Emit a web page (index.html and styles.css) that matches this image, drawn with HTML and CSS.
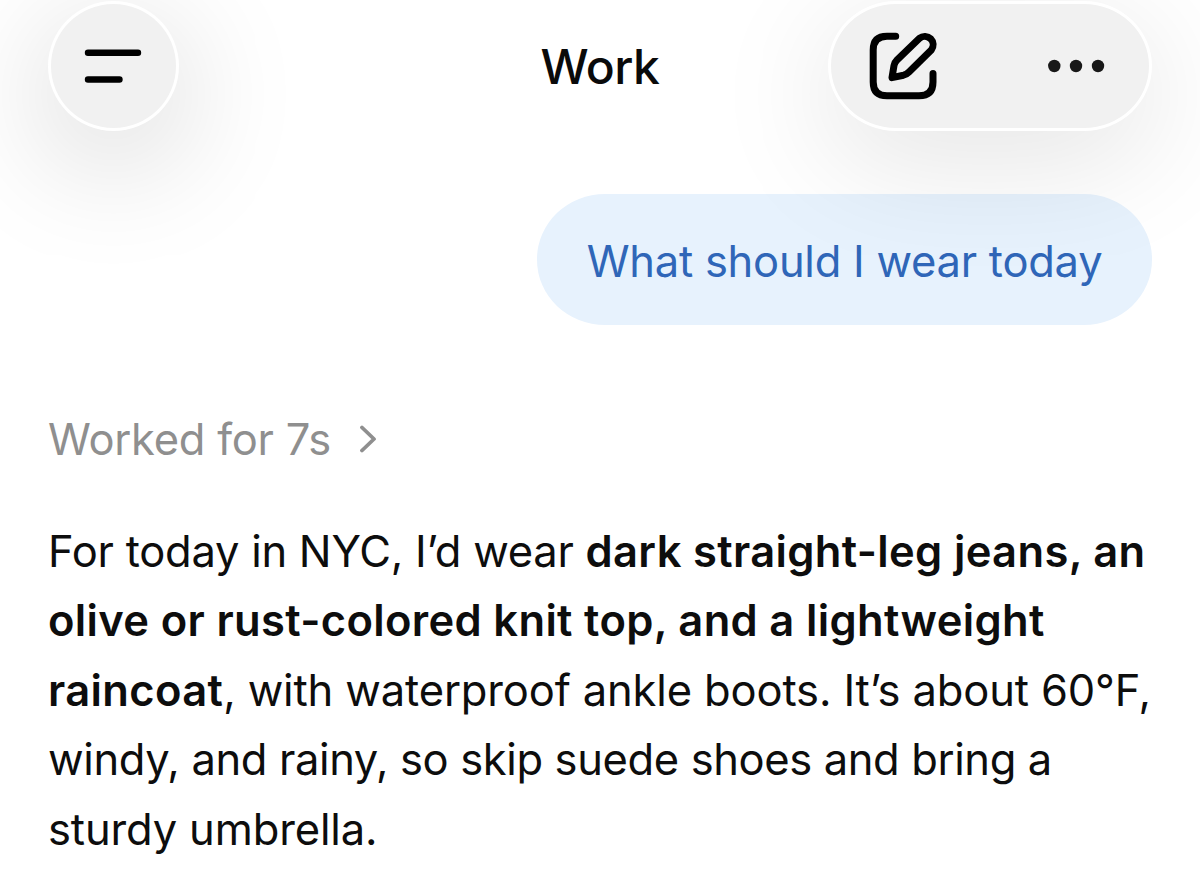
FILE: index.html
```html
<!DOCTYPE html>
<html lang="en">
<head>
    <meta charset="UTF-8">
    <meta name="viewport" content="width=device-width, initial-scale=1.0">
    <title>Work</title>
    <link rel="stylesheet" href="styles.css">
</head>
<body>

<header class="topbar">
    <button class="glass menu" aria-label="Menu">
        <svg width="131" height="130" viewBox="0 0 131 130">
            <path d="M40 51.7H90M40 78.5H71.5" />
        </svg>
    </button>
    <h1 class="title"><span class="line">Work</span></h1>
    <div class="glass actions">
        <svg class="wide" width="324" height="130" viewBox="828 1 324 130">
            <path d="M895.7 36.2H887Q873.2 36.2 873.2 50V82Q873.2 95.8 887 95.8H919Q933 95.8 933 82V73.5" />
            <path d="M892 77.6L894 65.5Q894.5 62.5 897 60L919.5 38.2A8.4 8.4 0 0 1 931.3 50L909 72Q906.5 74.5 903.5 75.2Z" />
            <g class="dots">
                <circle cx="1054.3" cy="66" r="6.2" />
                <circle cx="1076" cy="66" r="6.2" />
                <circle cx="1098" cy="66" r="6.2" />
            </g>
        </svg>
    </div>
</header>

<main class="chat">
    <div class="bubble"><span class="line">What should I wear today</span></div>
    <div class="status">
        <span class="line">Worked for 7s</span>
        <svg width="18" height="30" viewBox="0 0 18 30"><path d="M2 3.5L14 15L2 26.5" /></svg>
    </div>
    <div class="answer">
        <div><span class="line">For today in NYC, I’d wear </span><b class="line">dark straight-leg jeans, an</b></div>
        <div><b class="line">olive or rust-colored knit top, and a lightweight</b></div>
        <div><b class="line">raincoat</b><span class="line loose">, with waterproof ankle boots. It’s about 60°F,</span></div>
        <div><span class="line tight">windy, and rainy, so skip suede shoes and bring a</span></div>
        <div><span class="line loose">sturdy umbrella.</span></div>
    </div>
</main>

</body>
</html>
```
FILE: styles.css
```css
* {
    box-sizing: border-box;
}

body {
    margin: 0;
    height: 894px;
    overflow: hidden;
    background-color: #ffffff;
    color: #0d0d0d;
    font-family: Inter, sans-serif;
    font-size: 43.5px;
    letter-spacing: -0.25px;
}

/* sits above the chat so its shadow falls on the bubble */
.topbar {
    position: relative;
    z-index: 1;
    display: grid;
    grid-template-columns: 324px 1fr 324px;
    align-items: center;
    padding: 1px 48px 0;
    height: 131px;
}

.glass {
    height: 130px;
    padding: 0;
    border: 3px solid #ffffff;
    border-radius: 68px / 65px;
    background-color: #f1f1f1;
    box-shadow: 0 28px 120px 6px rgba(0, 0, 0, 0.1);
}

.glass svg {
    display: block;
    margin: -3px;
    fill: none;
    stroke: #000000;
    stroke-width: 6.4;
    stroke-linecap: round;
    stroke-linejoin: round;
}

.glass .wide {
    stroke-width: 7;
}

.menu {
    width: 131px;
    border-radius: 50%;
    box-shadow: 0 28px 120px 12px rgba(0, 0, 0, 0.13);
}

.glass .dots {
    fill: #181818;
    stroke: none;
}

.title {
    margin: 0;
    text-align: center;
    font-size: 48px;
    font-weight: 500;
    letter-spacing: -0.5px;
    color: #0a0a0a;
}

.line {
    white-space: pre;
}

.loose {
    letter-spacing: -0.14px;
}

.tight {
    letter-spacing: -0.37px;
}

.chat {
    display: flex;
    flex-direction: column;
    padding: 63px 48px 0;
}

.bubble {
    align-self: flex-end;
    width: 615px;
    height: 131px;
    border-radius: 68px / 65px;
    line-height: 135px;
    text-align: center;
    background-color: #e7f2fd;
    color: #2f66b8;
}

.status {
    display: flex;
    align-items: center;
    gap: 29px;
    height: 60px;
    margin-top: 84px;
    color: #8f8f8f;
}

.status svg {
    fill: none;
    stroke: #8f8f8f;
    stroke-width: 3.8;
    stroke-linecap: round;
    stroke-linejoin: round;
}

.answer {
    margin-top: 48px;
    line-height: 69.4px;
}

.answer b {
    font-weight: 600;
    letter-spacing: 0.34px;
}
```
